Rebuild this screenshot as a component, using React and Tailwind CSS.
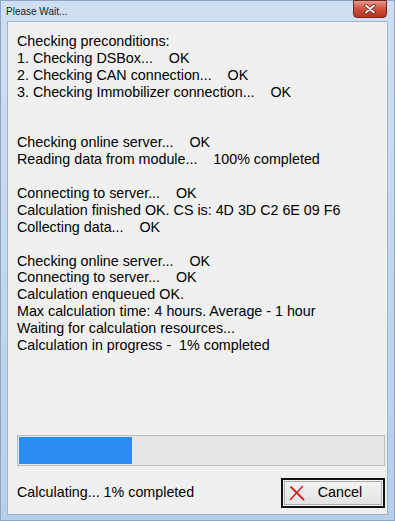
import React from 'react';

const lines = [
  'Checking preconditions:',
  '1. Checking DSBox...    OK',
  '2. Checking CAN connection...    OK',
  '3. Checking Immobilizer connection...    OK',
  '',
  '',
  'Checking online server...    OK',
  'Reading data from module...    100% completed',
  '',
  'Connecting to server...    OK',
  'Calculation finished OK. CS is: 4D 3D C2 6E 09 F6',
  'Collecting data...    OK',
  '',
  'Checking online server...    OK',
  'Connecting to server...    OK',
  'Calculation enqueued OK.',
  'Max calculation time: 4 hours. Average - 1 hour',
  'Waiting for calculation resources...',
  'Calculation in progress -  1% completed',
];

const progress = 113; // px width of blue fill

const App = () => {
  return (
    <div
      className="w-[395px] h-[521px] flex flex-col bg-gradient-to-b from-[#cfdff1] via-[#c3d7ee] to-[#b9cfe8] border border-[#8ea6c4]"
      style={{ fontFamily: '"Liberation Sans", Arial, sans-serif' }}
    >
      {/* Title bar */}
      <div className="h-[20px] flex items-start justify-between pl-[5px] pr-[7px]">
        <span className="text-[10px] leading-[22px] text-[#1e1e1e]">Please Wait...</span>
        <button className="w-[34px] h-[18px] -mt-px rounded-b-[4px] border border-[#6f2b24] bg-gradient-to-b from-[#e59a8c] via-[#cf4f3d] to-[#b8321f] flex items-center justify-center">
          <svg width="12" height="10" viewBox="0 0 12 10">
            <path d="M2 1.5 L10 8.5 M10 1.5 L2 8.5" stroke="#5a2018" strokeWidth="3.2" strokeLinecap="round" />
            <path d="M2 1.5 L10 8.5 M10 1.5 L2 8.5" stroke="#ffffff" strokeWidth="1.8" strokeLinecap="round" />
          </svg>
        </button>
      </div>

      {/* Client area */}
      <div className="flex-1 mx-[6px] mb-[5px] bg-[#f0f0f0] border border-[#9fb3cb] flex flex-col pl-[9px] pr-[2px] pt-[11px] pb-[6px]">
        <div className="text-[14.3px] leading-[16.9px] text-black">
          {lines.map((l, i) => (
            <div key={i} className="whitespace-pre h-[16.9px]">{l}</div>
          ))}
        </div>

        <div className="flex-1" />

        {/* Progress bar */}
        <div className="h-[31px] border border-[#bcbcbc] bg-[#e6e6e6] p-px">
          <div className="h-full bg-[#2b8df3]" style={{ width: `${progress}px` }} />
        </div>

        {/* Bottom row */}
        <div className="flex items-center justify-between mt-[12px]">
          <span className="text-[14.3px] text-black">Calculating... 1% completed</span>
          <button className="w-[104px] h-[30px] border-2 border-[#111] bg-[#f3f3f3] p-px">
            <div className="h-full border border-[#adadad] bg-gradient-to-b from-[#f2f2f2] to-[#e3e3e3] flex items-center pl-[4px]">
              <svg width="16" height="16" viewBox="0 0 16 16">
                <path d="M2 2 C6 6 10 10 14.5 14.5" stroke="#d81e1e" strokeWidth="1.8" fill="none" strokeLinecap="round" />
                <path d="M13.5 1.5 C9 6 6 9.5 1.5 14.5" stroke="#d81e1e" strokeWidth="1.5" fill="none" strokeLinecap="round" />
              </svg>
              <span className="flex-1 text-center text-[14.3px] text-black pr-[6px]">Cancel</span>
            </div>
          </button>
        </div>
      </div>
    </div>
  );
};

export default App;
